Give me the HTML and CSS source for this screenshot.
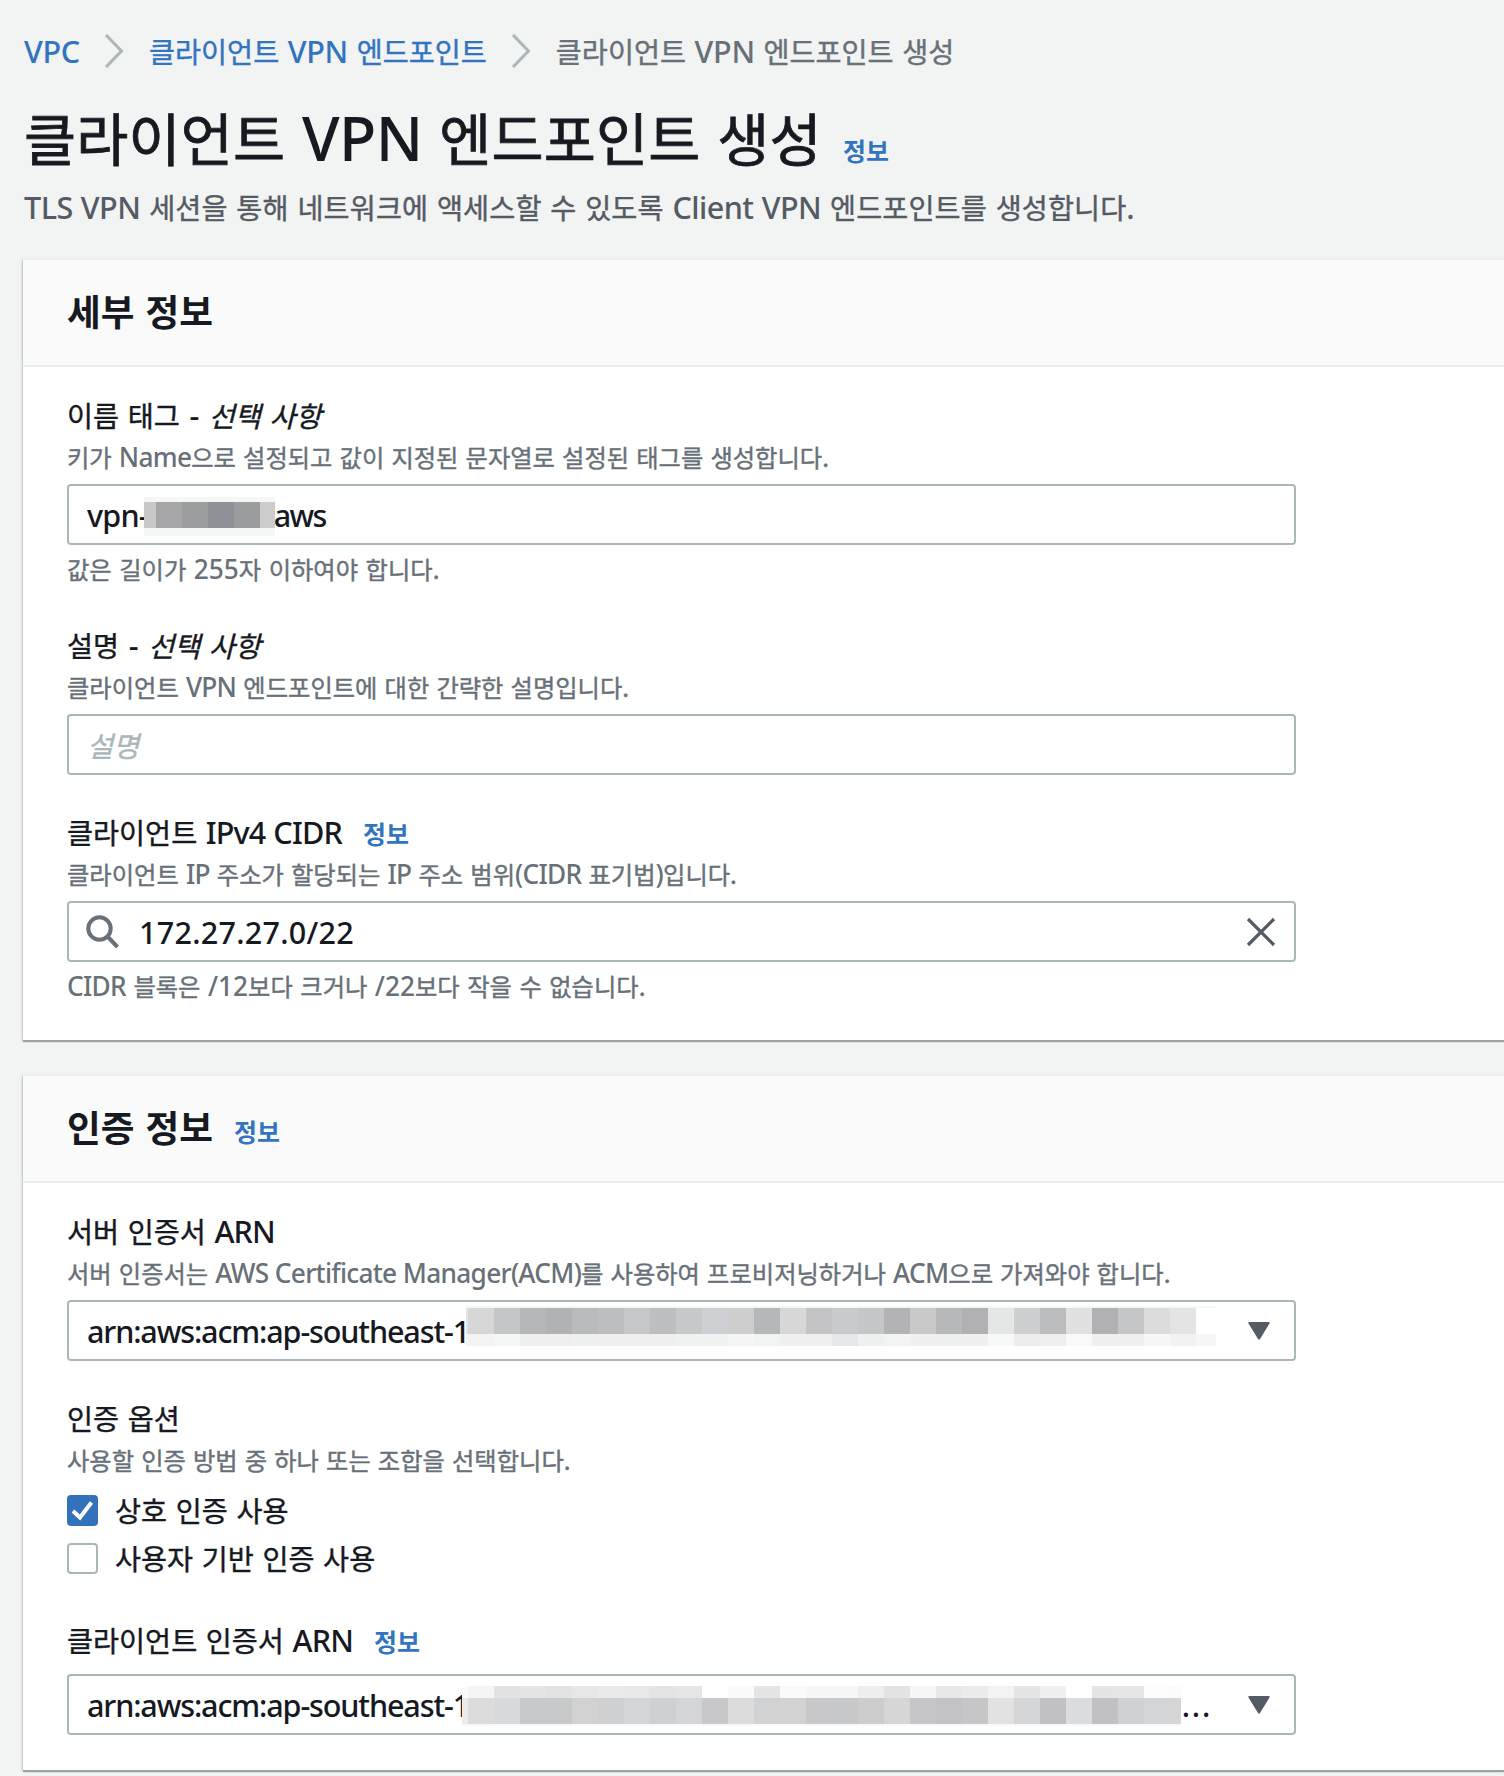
FILE: index.html
```html
<!DOCTYPE html>
<html lang="ko">
<head>
<meta charset="utf-8">
<title>클라이언트 VPN 엔드포인트 생성</title>
<link rel="stylesheet" href="styles.css">
</head>
<body>
<nav class="crumbs">
  <a><span class="en">VPC</span></a>
  <svg class="chev" viewBox="0 0 20 34"><path d="M2 1L17.500 17L2 33"/></svg>
  <a>클라이언트 <span class="en">VPN</span> 엔드포인트</a>
  <svg class="chev" viewBox="0 0 20 34"><path d="M2 1L17.500 17L2 33"/></svg>
  <span class="current">클라이언트 <span class="en">VPN</span> 엔드포인트 생성</span>
</nav>
<header class="page-head">
  <h1>클라이언트 <span class="en">VPN</span> 엔드포인트 생성</h1><a class="info">정보</a>
</header>
<p class="lead"><span class="en">TLS VPN</span> 세션을 통해 네트워크에 액세스할 수 있도록 <span class="en">Client VPN</span> 엔드포인트를 생성합니다.</p>

<section class="card">
  <header class="card-head"><h2>세부 정보</h2></header>
  <div class="card-body">
    <div class="field">
      <div class="label">이름 태그 <span class="en dash">-</span> <em>선택 사항</em></div>
      <div class="desc">키가 <span class="en">Name</span>으로 설정되고 값이 지정된 문자열로 설정된 태그를 생성합니다.</div>
      <div class="control"><span class="en">vpn-</span><span class="en after-mask">aws</span><div class="mosaic mosaic-name" data-mosaic="name"></div></div>
      <div class="hint">값은 길이가 <span class="en num">255</span>자 이하여야 합니다.</div>
    </div>
    <div class="field">
      <div class="label">설명 <span class="en dash">-</span> <em>선택 사항</em></div>
      <div class="desc">클라이언트 <span class="en">VPN</span> 엔드포인트에 대한 간략한 설명입니다.</div>
      <div class="control"><span class="placeholder">설명</span></div>
    </div>
    <div class="field">
      <div class="label">클라이언트 <span class="en">IPv4 CIDR</span><a class="info">정보</a></div>
      <div class="desc">클라이언트 <span class="en">IP</span> 주소가 할당되는 <span class="en">IP</span> 주소 범위<span class="en">(CIDR</span> 표기법<span class="en">)</span>입니다.</div>
      <div class="control">
        <svg class="search" viewBox="0 0 34 34"><circle cx="13.500" cy="13.500" r="11.200"/><path d="M21.500 21.500L31.500 32"/></svg>
        <span class="en num grow">172.27.27.0/22</span>
        <svg class="close" viewBox="0 0 30 30"><path d="M2 2L28 28M28 2L2 28"/></svg>
      </div>
      <div class="hint"><span class="en">CIDR</span> 블록은 <span class="en num">/12</span>보다 크거나 <span class="en num">/22</span>보다 작을 수 없습니다.</div>
    </div>
  </div>
</section>

<section class="card">
  <header class="card-head"><h2>인증 정보</h2><a class="info">정보</a></header>
  <div class="card-body">
    <div class="field">
      <div class="label">서버 인증서 <span class="en">ARN</span></div>
      <div class="desc">서버 인증서는 <span class="en">AWS Certificate Manager(ACM)</span>를 사용하여 프로비저닝하거나 <span class="en">ACM</span>으로 가져와야 합니다.</div>
      <div class="control"><span class="en arn grow">arn:aws:acm:ap-southeast-1</span><svg class="caret" viewBox="0 0 22 18"><path d="M1 0H21Q22 0 21.500 1.500L12 17Q11 18 10 17L.5 1.500Q0 0 1 0Z"/></svg><div class="mosaic mosaic-server" data-mosaic="server"></div></div>
    </div>
    <div class="field options">
      <div class="label">인증 옵션</div>
      <div class="desc">사용할 인증 방법 중 하나 또는 조합을 선택합니다.</div>
      <div class="check"><span class="box on"><svg viewBox="0 0 31 31"><path d="M6 16L13 22.500L24.500 7.500"/></svg></span>상호 인증 사용</div>
      <div class="check"><span class="box"></span>사용자 기반 인증 사용</div>
    </div>
    <div class="field">
      <div class="label">클라이언트 인증서 <span class="en">ARN</span><a class="info">정보</a></div>
      <div class="control client"><span class="en arn grow">arn:aws:acm:ap-southeast-1</span><span class="en dots">...</span><svg class="caret" viewBox="0 0 22 18"><path d="M1 0H21Q22 0 21.500 1.500L12 17Q11 18 10 17L.5 1.500Q0 0 1 0Z"/></svg><div class="mosaic mosaic-client" data-mosaic="client"></div></div>
    </div>
  </div>
</section>
<script src="mosaic.js"></script>
</body>
</html>
```
FILE: mosaic.js
```js
// Pixelated masks: every row is [height, first cell width, last cell width, colours]
const masks = {
  name: [
    [5, 12, 15, "f5f7f7 f5f7f7 f5f7f7 f5f7f7 f5f7f7 f5f7f7"],
    [26, 12, 15, "c8c8c9 a6a6a8 9c9d9f 909196 9b9c9e cdcdce"],
    [8, 12, 15, "f5f7f7 f5f7f7 f5f7f7 f5f7f7 f5f7f7 f5f7f7"]
  ],
  server: [
    [2, 2, 748, "f4f4f4 f7f7f7"],
    [26, 2, 20, "e5e5e5 d7d7d7 c4c6c8 b6b7b9 b1b2b4 b9babc bdbec0 c5c7c9 bdbec0 c6c8ca cfd0d3 cecece b6b7b9 d7d7d7 c4c4c6 c9cacc c4c6c8 b3b3b5 c9c9c9 b8b9bb b1b1b3 e4e7e5 cdcfd1 bbbcbe e1e1e1 b1b1b3 c4c6c8 dcdcdc e4e4e4 ffffff"],
    [12, 2, 20, "f7f7f7 f3f3f3 f5f7f7 efefef efefef eff1f0 efefef efefef efefef f0f1f1 f0f1f1 f4f5f5 f2f3f3 eff1f0 eff0ef e6e7ea eff1f0 f2f4f3 eff0ef eff1f0 f0f0f0 f7f8f8 ededee efefef f9f9f9 efefef eff0ef f6f7f7 f1f3f2 f6f6f6"]
  ],
  client: [
    [12, 6, 11, "fbfbfb f5f5f5 e2e2e2 e5e5e5 e2e4e3 e7e7e7 eaeaea e8e8e8 e4e4e4 e6e6e6 fefefe fbfbfb e5e5e5 fafafa f6f6f6 f6f6f6 eeeeee e2e4e3 f7f7f7 e7e7e7 ebebeb f3f3f3 e4e6e5 f0f0f0 fefefe e5e5e5 e6e6e6 fdfdfd fcfcfc"],
    [26, 6, 11, "ebebeb dcdcdc d8dadc c8c9cb c8c9cb d2d2d2 cfd0d2 d4d5d7 cfd0d2 d4d5d7 c8c8cb dcdcdc d1d2d4 d2d2d2 c8c8ca c7c8ca cdcdcd d6d6d6 c6c6c8 c3c3c5 c6c6c8 e2e2e2 d3d5d6 c1c1c3 dadcde c1c1c3 cfd1d3 d3d5d7 d6d6d6"],
    [2, 6, 713, "f7f7f7 f8f8f8"]
  ]
};
document.querySelectorAll("[data-mosaic]").forEach(el => {
  masks[el.dataset.mosaic].forEach(([height, first, last, colours]) => {
    const row = document.createElement("div");
    row.className = "mosaic-row";
    row.style.height = height + "px";
    colours.split(" ").forEach((colour, i, all) => {
      const cell = document.createElement("i");
      cell.style.width = (i === 0 ? first : i === all.length - 1 ? last : 26) + "px";
      cell.style.background = "#" + colour;
      row.append(cell);
    });
    el.append(row);
  });
});
```
FILE: styles.css
```css
* { box-sizing: border-box; }
body {
  margin: 0;
  height: 1776px;
  overflow: hidden;
  padding: 27px 0 0 23px;
  background: #f2f3f3;
  color: #16191f;
  font-family: "Noto Sans CJK KR", sans-serif;
  font-size: 28.3px;
  line-height: 44px;
  white-space: nowrap;
  word-spacing: .7px;
  -webkit-text-stroke: .4px currentColor;
}
.en { font-family: "Noto Sans", sans-serif; font-size: 1.08em; font-weight: 500; line-height: 0; letter-spacing: -.027em; -webkit-text-stroke: 0; }
.en.num { letter-spacing: 0; }
.control .en.num { letter-spacing: .25px; }
.en.arn { letter-spacing: -.037em; }
.en.dash { letter-spacing: 1px; margin-left: 1px; }
a { color: #3274c0; }
h1, h2, p { margin: 0; }
.crumbs, .page-head, .lead { padding-left: 1px; }
.crumbs { display: flex; align-items: center; height: 48px; color: #687078; }
.crumbs a:first-child { width: 56px; }
.crumbs .en { letter-spacing: -.01em; }
.chev { width: 20px; height: 34px; margin: 0 25px 0 24px; fill: none; stroke: #aab7b8; stroke-width: 3; }
.page-head { display: flex; align-items: baseline; height: 105px; }
h1 { font-size: 56.6px; font-weight: 400; line-height: 123px; letter-spacing: .2px; -webkit-text-stroke-width: .8px; }
h1 .en { letter-spacing: -.01em; }
.info { font-size: 25px; font-weight: 700; margin-left: 21px; line-height: 0; -webkit-text-stroke: 0; }
.lead { height: 79px; line-height: 54px; letter-spacing: .12px; color: #545b64; }
.lead .en { letter-spacing: -.017em; }
.card {
  margin-bottom: 35px;
  background: #fff;
  border-top: 1px solid #eaeded;
  box-shadow: 0 2px 1px #9ba5a8, -1px 1px 2px #c4caca;
}
.card-head {
  display: flex;
  align-items: baseline;
  height: 107px;
  padding-left: 44px;
  background: #fafafa;
  border-bottom: 2px solid #eaeded;
}
h2 { font-size: 36.700px; line-height: 100px; -webkit-text-stroke: 0; }
.card-body { padding: 26px 44px 35px; }
.field + .field { margin-top: 35px; }
.label { height: 44px; }
.desc, .hint { font-size: 24.3px; height: 39px; line-height: 40px; color: #687078; }
.desc { word-spacing: .3px; }
.hint { margin-top: 4px; }
.control {
  position: relative;
  display: flex;
  align-items: center;
  width: 1229px;
  height: 61px;
  margin-top: 8px;
  padding: 0 18px;
  border: 2px solid #aab7b8;
  border-radius: 4px;
  background: #fff;
}
.control.client { margin-top: 12px; }
.grow { flex: 1; }
.placeholder { font-style: italic; color: #aab7b8; }
.after-mask { margin-left: 126px; letter-spacing: -.055em; }
.search { width: 34px; height: 34px; margin: 0 19px 0 -1px; fill: none; stroke: #687078; stroke-width: 4; }
.close { width: 30px; height: 30px; fill: none; stroke: #545b64; stroke-width: 3.200; }
.caret { width: 22px; height: 18px; margin-right: 6px; fill: #545b64; }
.control .en.dots { margin-right: 36px; letter-spacing: 1.8px; }
.mosaic { position: absolute; }
.mosaic-name { left: 75px; top: 11px; }
.mosaic-server { left: 397px; top: 4px; }
.mosaic-client { left: 393px; top: 10px; }
.mosaic-row { display: flex; }
.options .desc { margin-bottom: 7px; }
.options { padding-bottom: 1px; }
.check { display: flex; align-items: center; height: 48px; }
.box { width: 31px; height: 31px; margin-right: 17px; border: 2px solid #aab7b8; border-radius: 4px; }
.box.on { border: 0; background: #3272bb; }
.box svg { display: block; fill: none; stroke: #fff; stroke-width: 4; }
```
